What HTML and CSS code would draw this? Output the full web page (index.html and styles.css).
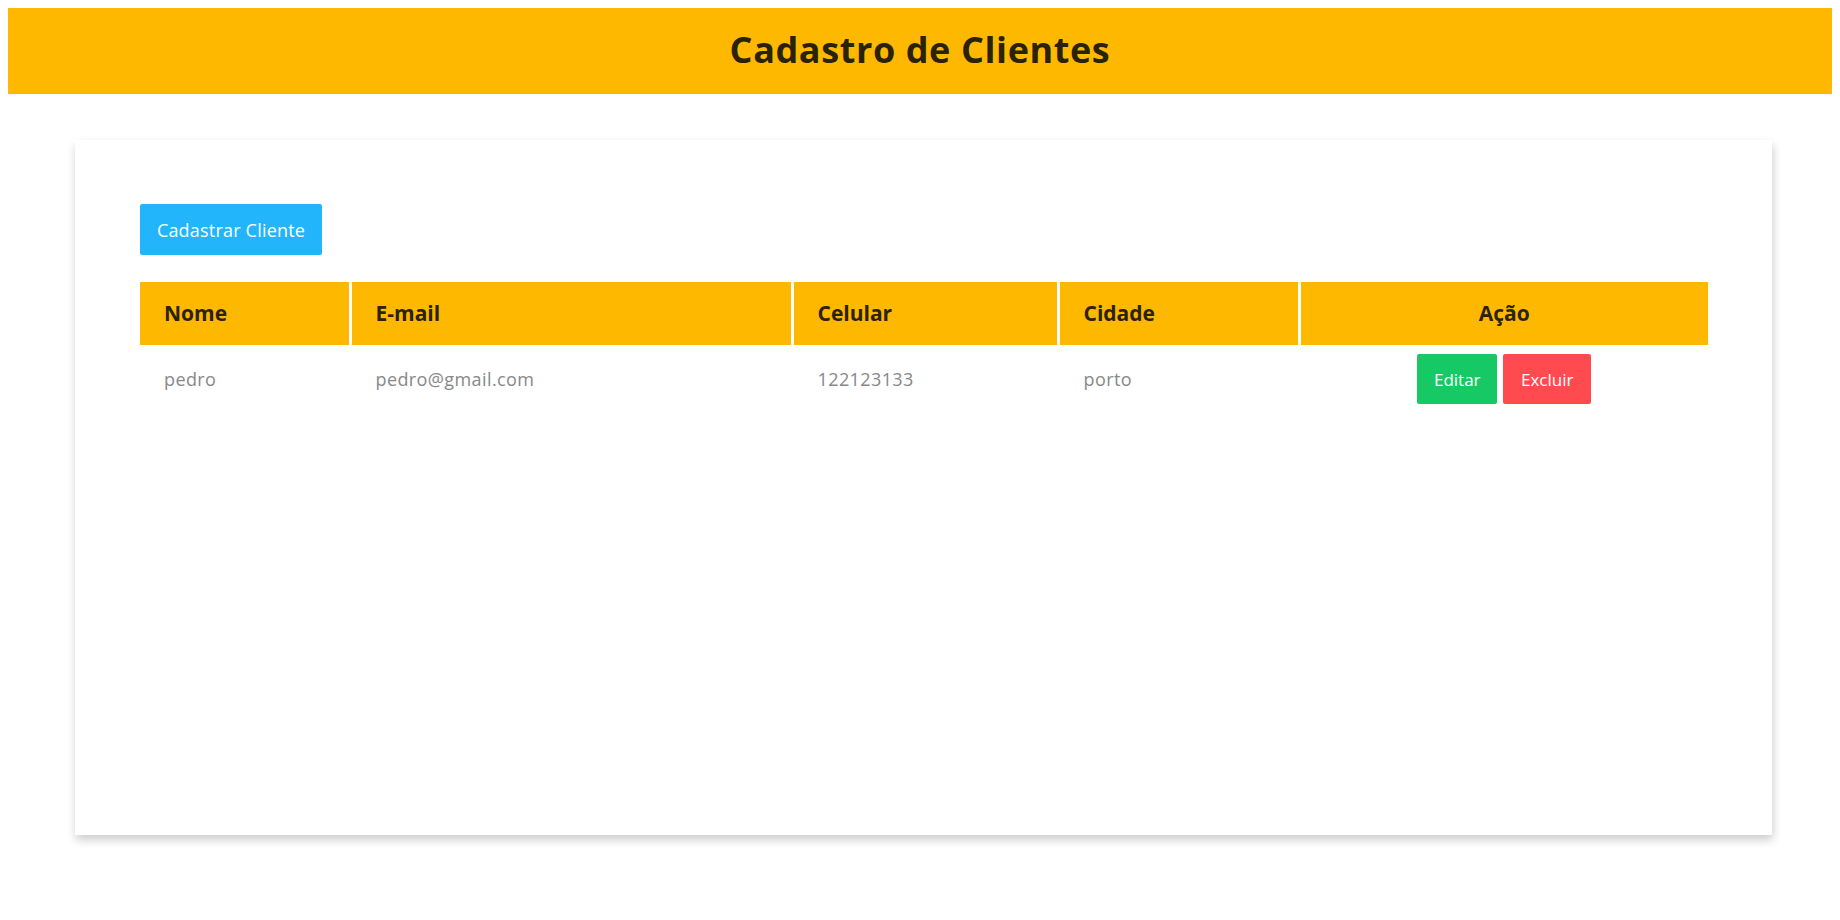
FILE: index.html
```html
<!DOCTYPE html>
<html lang="pt">
<head>
<meta charset="utf-8">
<title>Cadastro de Clientes</title>
<link rel="stylesheet" href="styles.css">
</head>
<body>
<header class="topbar">
  <h1 class="title">Cadastro de Clientes</h1>
</header>
<main class="card">
  <button class="btn btn-new">Cadastrar Cliente</button>
  <table class="grid">
    <colgroup>
      <col class="c-nome"><col class="c-email"><col class="c-cel"><col class="c-cid"><col class="c-acao">
    </colgroup>
    <thead>
      <tr>
        <th>Nome</th>
        <th>E-mail</th>
        <th>Celular</th>
        <th>Cidade</th>
        <th class="center">Ação</th>
      </tr>
    </thead>
    <tbody>
      <tr>
        <td>pedro</td>
        <td>pedro@gmail.com</td>
        <td>122123133</td>
        <td>porto</td>
        <td class="actions">
          <div class="action-group">
            <button class="btn btn-edit">Editar</button>
            <button class="btn btn-del">Excluir</button>
          </div>
        </td>
      </tr>
    </tbody>
  </table>
</main>
<div class="spacer"></div>
</body>
</html>
```
FILE: styles.css
```css
* { box-sizing: border-box; }
html, body { min-height: 100%; }
body {
  margin: 8px;
  background: #fff;
  font-family: "Open Sans", Lato, "DejaVu Sans", sans-serif;
  color: #333;
}
.topbar {
  background: #ffb800;
  height: 86px;
  display: flex;
  align-items: center;
  justify-content: center;
  padding-bottom: 2px;
}
.title {
  margin: 0;
  font-size: 36px;
  line-height: 44px;
  font-weight: 700;
  color: #2a2300;
  letter-spacing: 0.6px;
}
.card {
  display: block;
  margin: 46px 60px 0 67px;
  height: 695px;
  padding: 64px 64px 0 65px;
  background: #fff;
  box-shadow: 1px 5px 9px rgba(0,0,0,0.2);
}
.spacer { height: 80px; }
.btn {
  border: none;
  color: #fff;
  font-family: inherit;
  font-size: 17px;
  height: 50px;
  padding: 0 10px;
  border-radius: 2px;
  cursor: pointer;
}
.btn-new {
  background: #22b5fb;
  width: 182px;
  height: 51px;
  display: block;
  font-size: 18px;
  letter-spacing: 0.2px;
}
.grid {
  margin-top: 27px;
  width: 100%;
  border-collapse: collapse;
  table-layout: fixed;
}
.c-nome { width: 210px; }
.c-email { width: 442px; }
.c-cel { width: 266px; }
.c-cid { width: 241px; }
.c-acao { width: 409px; }
.grid th {
  background: #ffb800;
  color: #2a2300;
  font-size: 21px;
  font-weight: 700;
  text-align: left;
  padding: 20px 24px;
  line-height: 23px;
}
.grid th + th { border-left: 3px solid #fff; }
.grid th.center { text-align: center; }
.grid td {
  color: #888;
  font-size: 18px;
  letter-spacing: 0.4px;
  padding: 9px 24px;
  vertical-align: middle;
}
.grid td + td { border-left: 3px solid transparent; }
.action-group {
  display: flex;
  justify-content: center;
  gap: 6px;
  letter-spacing: 0;
}
.btn-edit { background: #17c964; width: 80px; }
.btn-del { background: #ff4a50; width: 88px; }
```
